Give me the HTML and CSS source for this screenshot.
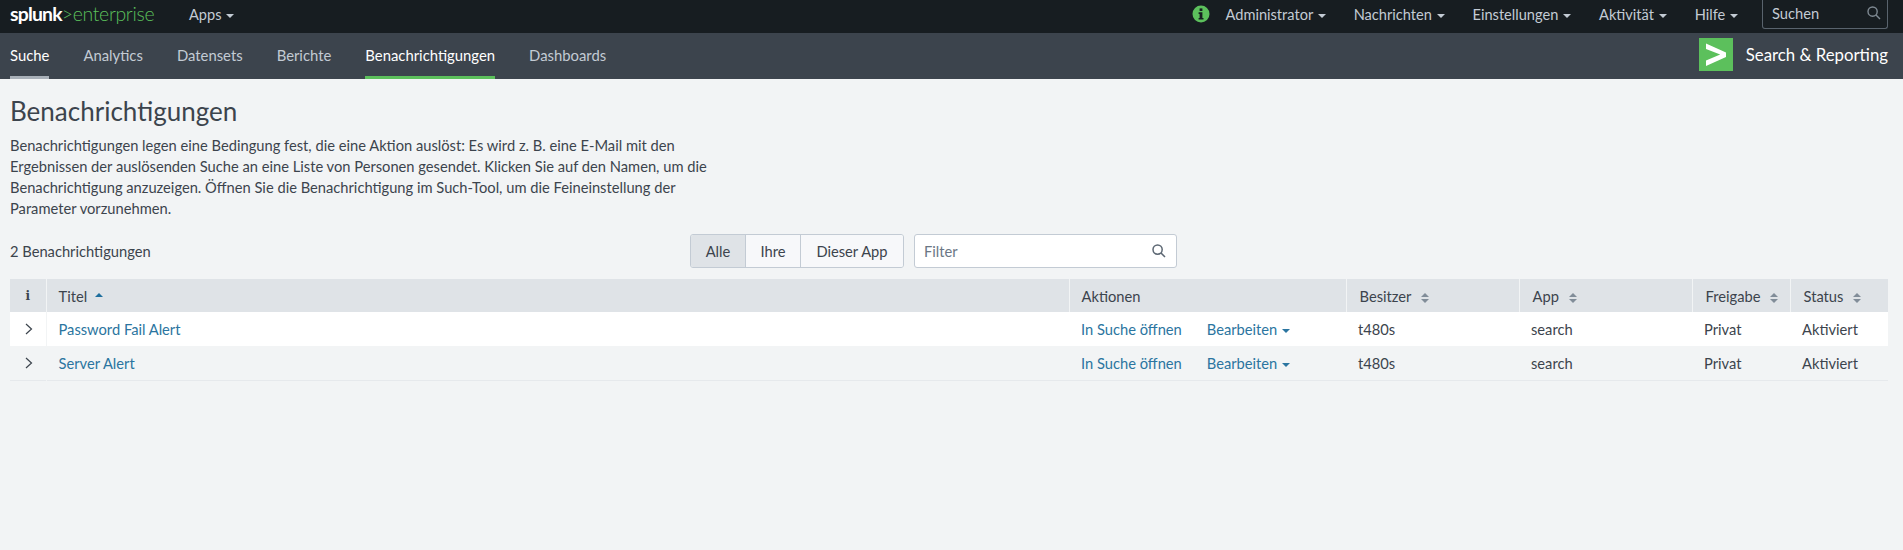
FILE: index.html
```html
<!DOCTYPE html>
<html lang="de">
<head>
<meta charset="UTF-8">
<title>Benachrichtigungen | Splunk</title>
<link rel="stylesheet" href="styles.css">
</head>
<body>
<header class="topbar">
    <a class="logo" href="#"><span class="logo-splunk">splunk</span><span class="logo-gt">&gt;</span><span class="logo-ent">enterprise</span></a>
    <a class="top-link apps" href="#">Apps <i class="caret"></i></a>
    <div class="top-right">
        <svg class="info-icon" width="18" height="18" viewBox="0 0 18 18">
            <circle cx="9" cy="9" r="8.5" fill="#5cc05c"/>
            <rect x="7.6" y="3.4" width="2.8" height="2.6" fill="#171d21"/>
            <path d="M6.6 7.3h3.8v5.6h1.1v1.6H6.6v-1.6h1V8.9h-1z" fill="#171d21"/>
        </svg>
        <a class="top-link admin" href="#">Administrator <i class="caret"></i></a>
        <a class="top-link" href="#">Nachrichten <i class="caret"></i></a>
        <a class="top-link" href="#">Einstellungen <i class="caret"></i></a>
        <a class="top-link" href="#">Aktivität <i class="caret"></i></a>
        <a class="top-link" href="#">Hilfe <i class="caret"></i></a>
        <div class="top-search">
            <span>Suchen</span>
            <svg width="14" height="14" viewBox="0 0 14 14" fill="none" stroke="#7f8a93" stroke-width="1.4">
                <circle cx="5.6" cy="5.6" r="4.6"/>
                <path d="M9 9l4 4"/>
            </svg>
        </div>
    </div>
</header>

<nav class="appbar">
    <a class="tab tab-first" href="#">Suche</a>
    <a class="tab" href="#">Analytics</a>
    <a class="tab" href="#">Datensets</a>
    <a class="tab" href="#">Berichte</a>
    <a class="tab tab-active" href="#">Benachrichtigungen</a>
    <a class="tab" href="#">Dashboards</a>
    <div class="app-title">
        <svg width="34" height="33" viewBox="0 0 34 33">
            <rect width="34" height="33" fill="#5cc05c"/>
            <path d="M7 5.5l20 9v4.5l-20 9v-5.6l14.2-5.9L7 11z" fill="#fff"/>
        </svg>
        <span>Search &amp; Reporting</span>
    </div>
</nav>

<main class="content">
    <h1>Benachrichtigungen</h1>
    <p class="intro">Benachrichtigungen legen eine Bedingung fest, die eine Aktion auslöst: Es wird z. B. eine E-Mail mit den Ergebnissen der auslösenden Suche an eine Liste von Personen gesendet. Klicken Sie auf den Namen, um die Benachrichtigung anzuzeigen. Öffnen Sie die Benachrichtigung im Such-Tool, um die Feineinstellung der Parameter vorzunehmen.</p>

    <div class="controls">
        <div class="count">2 Benachrichtigungen</div>
        <div class="btn-group">
            <button class="btn btn-on btn-alle">Alle</button>
            <button class="btn btn-ihre">Ihre</button>
            <button class="btn btn-app">Dieser App</button>
        </div>
        <div class="filter">
            <span>Filter</span>
            <svg width="14" height="14" viewBox="0 0 14 14" fill="none" stroke="#5c6773" stroke-width="1.5">
                <circle cx="5.6" cy="5.6" r="4.6"/>
                <path d="M9 9l4 4"/>
            </svg>
        </div>
    </div>

    <table class="alerts">
        <colgroup>
            <col class="c-info"><col class="c-title"><col class="c-actions"><col class="c-owner"><col class="c-app"><col class="c-share"><col class="c-status">
        </colgroup>
        <thead>
            <tr>
                <th class="info-head">i</th>
                <th>Titel <i class="sort-up"></i></th>
                <th>Aktionen</th>
                <th>Besitzer <i class="sort"></i></th>
                <th>App <i class="sort"></i></th>
                <th>Freigabe <i class="sort"></i></th>
                <th>Status <i class="sort"></i></th>
            </tr>
        </thead>
        <tbody>
            <tr class="row-odd">
                <td class="expand"><svg width="8" height="12" viewBox="0 0 8 12" fill="none" stroke="#3c444d" stroke-width="1.2"><path d="M1 1l5.5 5L1 11"/></svg></td>
                <td><a href="#">Password Fail Alert</a></td>
                <td class="actions"><a href="#">In Suche öffnen</a><a class="edit" href="#">Bearbeiten <i class="caret caret-blue"></i></a></td>
                <td>t480s</td>
                <td>search</td>
                <td>Privat</td>
                <td>Aktiviert</td>
            </tr>
            <tr>
                <td class="expand"><svg width="8" height="12" viewBox="0 0 8 12" fill="none" stroke="#3c444d" stroke-width="1.2"><path d="M1 1l5.5 5L1 11"/></svg></td>
                <td><a href="#">Server Alert</a></td>
                <td class="actions"><a href="#">In Suche öffnen</a><a class="edit" href="#">Bearbeiten <i class="caret caret-blue"></i></a></td>
                <td>t480s</td>
                <td>search</td>
                <td>Privat</td>
                <td>Aktiviert</td>
            </tr>
        </tbody>
    </table>
</main>
</body>
</html>
```

FILE: styles.css
```css
html,
body {
    height: 100%;
}

body {
    margin: 0;
    background: #f2f4f5;
    color: #3c444d;
    font-family: 'Lato', sans-serif;
    font-size: 14.7px;
}

a {
    text-decoration: none;
    color: inherit;
}

.caret {
    display: inline-block;
    vertical-align: middle;
    margin-left: 1px;
    border-top: 4px solid currentColor;
    border-left: 4px solid transparent;
    border-right: 4px solid transparent;
}

.caret-blue {
    color: #2b75a0;
}

/* top bar */
.topbar {
    display: flex;
    align-items: center;
    box-sizing: border-box;
    height: 33px;
    padding: 0 15px 5px 10px;
    background: #171d21;
    color: #c3cbd4;
}

.logo {
    width: 179px;
    font-size: 19.4px;
    letter-spacing: -0.3px;
    line-height: 28px;
}

.logo-splunk {
    color: #fff;
    font-weight: 700;
    letter-spacing: -0.8px;
}

.logo-gt,
.logo-ent {
    color: #5cc05c;
    font-weight: 300;
}

.top-right {
    display: flex;
    align-items: center;
    margin-left: auto;
}

.top-link {
    margin-right: 28px;
    font-size: 14.6px;
    white-space: nowrap;
}

.top-right .top-link:nth-of-type(5) {
    margin-right: 24px;
}

.info-icon {
    margin-right: 15px;
}

.top-search {
    display: flex;
    align-items: center;
    justify-content: space-between;
    box-sizing: border-box;
    width: 126px;
    height: 30px;
    margin-bottom: 1px;
    padding: 0 6px 0 9px;
    border: 1px solid #59636d;
    border-top: 0;
    border-radius: 0 0 3px 3px;
}

/* app bar */
.appbar {
    display: flex;
    gap: 34px;
    height: 46px;
    padding: 0 15px 0 10px;
    background: #3c444d;
}

.tab {
    box-sizing: border-box;
    height: 46px;
    padding-top: 13px;
    color: #c3cbd4;
    font-size: 14.85px;
    border-bottom: 3px solid transparent;
}

.tab-first {
    color: #fff;
    border-bottom-color: #a8b0b8;
}

.tab-active {
    color: #fff;
    border-bottom-color: #5cc05c;
}

.app-title {
    display: flex;
    align-items: center;
    gap: 13px;
    margin-left: auto;
    padding-bottom: 3px;
    color: #fff;
    font-size: 16.8px;
}

/* page content */
.content {
    padding: 0 15px 0 10px;
}

h1 {
    margin: 17px 0 0;
    font-size: 26px;
    font-weight: 400;
    line-height: 30px;
    color: #3c444d;
}

.intro {
    width: 730px;
    margin: 9px 0 0;
    line-height: 21px;
}

.controls {
    display: flex;
    align-items: center;
    height: 34px;
    margin-top: 15px;
}

.count {
    width: 680px;
}

.btn-group {
    display: flex;
    box-sizing: border-box;
    width: 214px;
    height: 34px;
    border: 1px solid #c3cbd4;
    border-radius: 3px;
    overflow: hidden;
}

.btn {
    padding: 0;
    border: 0;
    border-right: 1px solid #c3cbd4;
    background: #f7f8fa;
    color: #3c444d;
    font: inherit;
}

.btn:last-child {
    border-right: 0;
}

.btn-on {
    background: #dfe3e7;
}

.btn-alle {
    width: 55px;
}

.btn-ihre {
    width: 55px;
}

.btn-app {
    flex: 1;
}

.filter {
    display: flex;
    align-items: center;
    justify-content: space-between;
    box-sizing: border-box;
    width: 263px;
    height: 34px;
    margin-left: 10px;
    padding: 0 10px 0 9px;
    background: #fff;
    border: 1px solid #c3cbd4;
    border-radius: 3px;
    color: #6b7785;
}

/* table */
.alerts {
    width: 1878px;
    margin-top: 11px;
    table-layout: fixed;
    border-collapse: collapse;
}

.c-info { width: 36px; }
.c-title { width: 1023px; }
.c-actions { width: 277px; }
.c-owner { width: 173px; }
.c-app { width: 173px; }
.c-share { width: 98px; }
.c-status { width: 98px; }

th {
    height: 33px;
    padding: 0 0 0 12px;
    background: #dfe3e7;
    border-left: 1px solid #f2f4f5;
    font-weight: 400;
    text-align: left;
    color: #3c444d;
    white-space: nowrap;
}

th:first-child {
    border-left: 0;
}

th:nth-child(n+4) {
    padding-left: 13px;
}

.info-head {
    padding: 0;
    text-align: center;
    font-family: 'DejaVu Serif', serif;
    font-weight: 700;
    font-size: 12px;
}

td {
    height: 34px;
    padding: 0 12px;
    box-sizing: border-box;
}

td a {
    color: #2b75a0;
}

tbody tr {
    border-bottom: 1px solid #e6e9ec;
}

.row-odd {
    background: #fff;
    border-bottom: 0;
}

.expand {
    padding: 0 0 0 15px;
    border-right: 1px solid #f2f4f5;
}

.expand svg {
    display: block;
}

.edit {
    margin-left: 25px;
}

.sort,
.sort-up {
    display: inline-block;
    position: relative;
    width: 8px;
    height: 10px;
    margin-left: 6px;
    vertical-align: -1px;
}

.sort::before,
.sort-up::before,
.sort::after {
    content: '';
    position: absolute;
    left: 0;
    border-left: 4px solid transparent;
    border-right: 4px solid transparent;
}

.sort::before {
    top: 0;
    border-bottom: 4px solid #818d99;
}

.sort::after {
    bottom: 0;
    border-top: 4px solid #818d99;
}

.sort-up {
    margin-left: 4px;
}

.sort-up::before {
    top: 0;
    border-bottom: 4px solid #1e6f9e;
}
```
